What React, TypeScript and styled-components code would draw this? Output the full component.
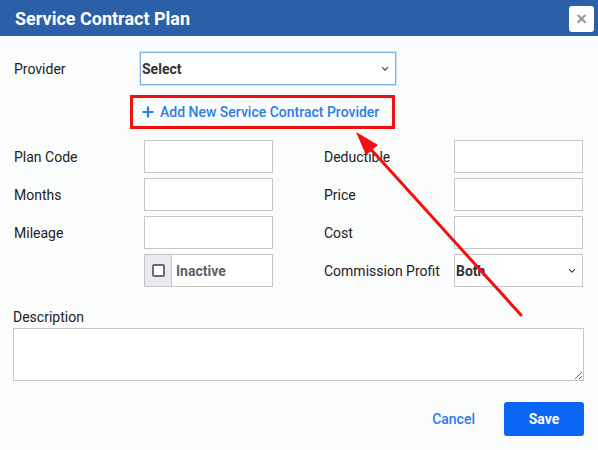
import React from "react";
import styled, { createGlobalStyle } from "styled-components";

const GlobalStyle = createGlobalStyle`
  html, body {
    margin: 0;
    padding: 0;
    background: #ffffff;
  }
  * {
    box-sizing: border-box;
  }
`;

const Modal = styled.div`
  position: relative;
  width: 598px;
  height: 450px;
  background: #fbfcfc;
  font-family: Roboto, "Liberation Sans", Arial, sans-serif;
  color: #222;
  overflow: hidden;
`;

const Header = styled.div`
  height: 36px;
  background: #2b5fa8;
  display: flex;
  align-items: center;
  justify-content: space-between;
  padding: 0 4px 0 15px;
`;

const Title = styled.h2`
  margin: 0;
  font-size: 18px;
  font-weight: 700;
  color: #ffffff;
`;

const CloseBtn = styled.button`
  width: 25px;
  height: 26px;
  margin-top: 1px;
  border: 0;
  border-radius: 3px;
  background: #ffffff;
  color: #9a9a9a;
  font-size: 19px;
  font-weight: 700;
  line-height: 1;
  padding: 0;
  display: flex;
  align-items: center;
  justify-content: center;
`;

const Body = styled.div`
  padding: 16px 14px 0 14px;
`;

const ProviderRow = styled.div`
  display: grid;
  grid-template-columns: 126px 256px;
  align-items: center;
`;

const Label = styled.label`
  font-size: 14px;
  color: #222;
  white-space: nowrap;
`;

const SelectWrap = styled.div<{ $focused?: boolean }>`
  position: relative;
  height: 33px;
  background: #fff;
  border: 1px solid ${(p) => (p.$focused ? "#7eb0ec" : "#c6c6c6")};
  box-shadow: ${(p) => (p.$focused ? "0 0 0 1px rgba(126,176,236,0.35)" : "none")};
`;

const Select = styled.select`
  appearance: none;
  -webkit-appearance: none;
  width: 100%;
  height: 100%;
  border: 0;
  outline: none;
  background: transparent;
  padding: 0 0 0 1px;
  font-family: inherit;
  font-size: 14px;
  font-weight: 700;
  color: #333;
`;

const Chevron = styled.svg`
  position: absolute;
  right: 6px;
  top: 50%;
  margin-top: -3px;
  pointer-events: none;
`;

const LinkRow = styled.div`
  margin: 10px 0 0 116px;
`;

const AddLinkBox = styled.div`
  width: 265px;
  height: 34px;
  border: 3px solid #f01010;
  display: flex;
  align-items: center;
  padding-left: 9px;
`;

const AddLink = styled.a`
  display: flex;
  align-items: center;
  gap: 6px;
  font-size: 14px;
  font-weight: 500;
  color: #2b7de9;
  text-decoration: none;
`;

const FieldGrid = styled.div`
  margin-top: 11px;
  display: grid;
  grid-template-columns: 130px 180px 130px 129px;
  row-gap: 5px;
  align-items: center;
`;

const Input = styled.input`
  width: 129px;
  height: 33px;
  border: 1px solid #c6c6c6;
  background: #fff;
  padding: 0 6px;
  font-family: inherit;
  font-size: 14px;
  outline: none;
`;

const CheckGroup = styled.div`
  display: flex;
  width: 129px;
  height: 33px;
  border: 1px solid #c6c6c6;
  background: #fff;
`;

const CheckAddon = styled.span`
  width: 27px;
  background: #e8eaee;
  border-right: 1px solid #c6c6c6;
  display: flex;
  align-items: center;
  justify-content: center;
`;

const CheckBox = styled.span`
  width: 13px;
  height: 13px;
  border: 2px solid #6c6a7a;
  border-radius: 2px;
  background: #fff;
`;

const CheckText = styled.span`
  display: flex;
  align-items: center;
  padding-left: 4px;
  font-size: 14px;
  font-weight: 700;
  color: #5c6068;
`;

const SmallSelectWrap = styled(SelectWrap)`
  width: 129px;
`;

const DescBlock = styled.div`
  margin-top: 22px;
  margin-left: -1px;
`;

const DescLabel = styled.div`
  font-size: 14px;
  color: #222;
  line-height: 17px;
  margin-bottom: 2px;
`;

const TextArea = styled.textarea`
  display: block;
  width: 571px;
  height: 53px;
  border: 1px solid #c6c6c6;
  background: #fff;
  resize: vertical;
  font-family: inherit;
  outline: none;
`;

const Footer = styled.div`
  margin-top: 21px;
  display: flex;
  justify-content: flex-end;
  align-items: center;
  gap: 29px;
`;

const CancelBtn = styled.button`
  border: 0;
  background: transparent;
  padding: 0;
  font-family: inherit;
  font-size: 14px;
  font-weight: 500;
  color: #2b7de9;
`;

const SaveBtn = styled.button`
  width: 80px;
  height: 34px;
  border: 0;
  border-radius: 3px;
  background: #0b66f6;
  color: #fff;
  font-family: inherit;
  font-size: 14px;
  font-weight: 700;
`;

const Annotation = styled.svg`
  position: absolute;
  left: 0;
  top: 0;
  pointer-events: none;
`;

const ChevronIcon = () => (
  <Chevron width="8" height="6" viewBox="0 0 8 6">
    <path d="M1 1.2 L4 4.2 L7 1.2" fill="none" stroke="#444" strokeWidth="1.2" />
  </Chevron>
);

const left = ["Plan Code", "Months", "Mileage"];
const right = ["Deductible", "Price", "Cost"];

export default function App() {
  return (
    <>
      <GlobalStyle />
      <Modal>
        <Header>
          <Title>Service Contract Plan</Title>
          <CloseBtn>×</CloseBtn>
        </Header>
        <Body>
          <ProviderRow>
            <Label>Provider</Label>
            <SelectWrap $focused>
              <Select defaultValue="">
                <option value="">Select</option>
              </Select>
              <ChevronIcon />
            </SelectWrap>
          </ProviderRow>
          <LinkRow>
            <AddLinkBox>
              <AddLink href="#">
                <svg width="12" height="12" viewBox="0 0 12 12">
                  <path d="M6 0.5 V11.5 M0.5 6 H11.5" stroke="#2b7de9" strokeWidth="2.2" />
                </svg>
                Add New Service Contract Provider
              </AddLink>
            </AddLinkBox>
          </LinkRow>
          <FieldGrid>
            {left.map((l, i) => (
              <React.Fragment key={l}>
                <Label>{l}</Label>
                <Input />
                <Label>{right[i]}</Label>
                <Input />
              </React.Fragment>
            ))}
            <span />
            <CheckGroup>
              <CheckAddon>
                <CheckBox />
              </CheckAddon>
              <CheckText>Inactive</CheckText>
            </CheckGroup>
            <Label>Commission Profit</Label>
            <SmallSelectWrap>
              <Select defaultValue="both">
                <option value="both">Both</option>
              </Select>
              <ChevronIcon />
            </SmallSelectWrap>
          </FieldGrid>
          <DescBlock>
            <DescLabel>Description</DescLabel>
            <TextArea />
          </DescBlock>
          <Footer>
            <CancelBtn>Cancel</CancelBtn>
            <SaveBtn>Save</SaveBtn>
          </Footer>
        </Body>
        <Annotation width="598" height="450" viewBox="0 0 598 450">
          <line x1="521" y1="315" x2="368" y2="146" stroke="#f21010" strokeWidth="3" strokeLinecap="round" />
          <polygon points="356,132 378,145 366,155" fill="#f21010" />
        </Annotation>
      </Modal>
    </>
  );
}
